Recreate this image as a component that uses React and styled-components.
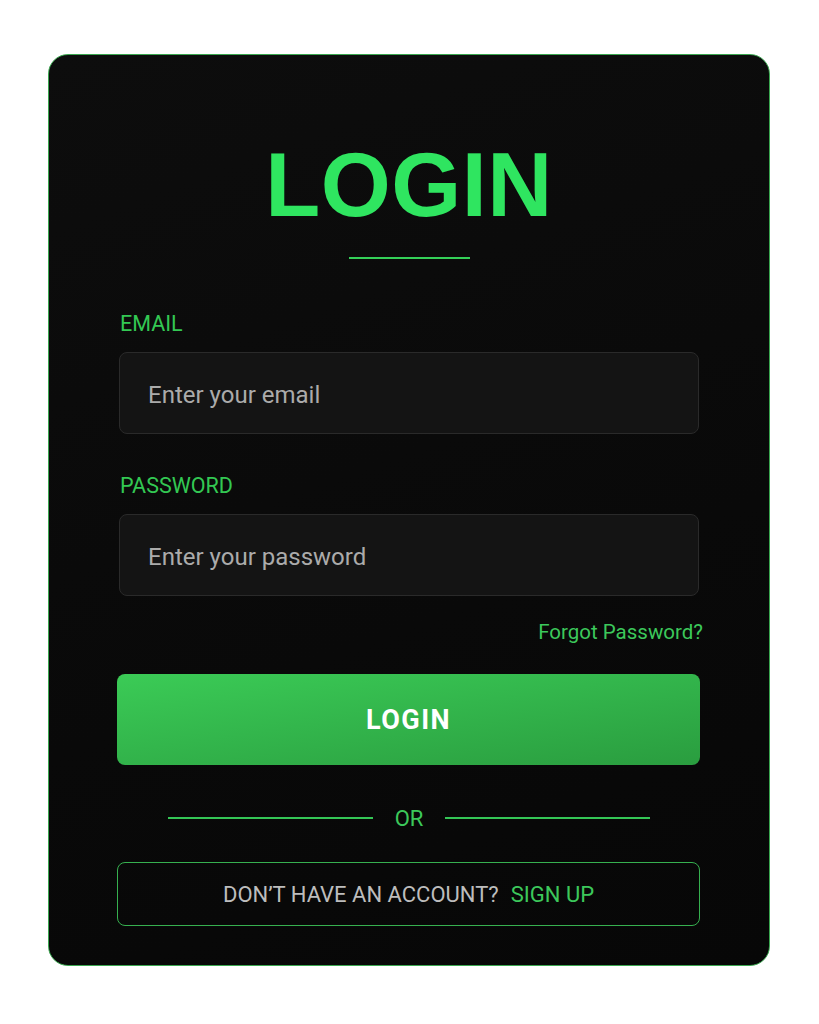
import React from "react";
import styled, { createGlobalStyle } from "styled-components";

const GlobalStyle = createGlobalStyle`
  html, body {
    margin: 0;
    padding: 0;
    background: #ffffff;
  }
  * {
    box-sizing: border-box;
  }
`;

const Page = styled.div`
  padding: 54px 0 58px 48px;
  font-family: Roboto, "Liberation Sans", sans-serif;
`;

const Card = styled.div`
  width: 722px;
  height: 912px;
  padding: 85px 70px 0 70px;
  background: linear-gradient(160deg, #0d0d0d 0%, #090909 60%, #070707 100%);
  border: 1.5px solid #3aa64f;
  border-radius: 20px;
  display: flex;
  flex-direction: column;
`;

const Title = styled.h1`
  margin: 0;
  font-family: "Liberation Sans", Arial, sans-serif;
  font-size: 90px;
  line-height: 90px;
  font-weight: 700;
  color: #2fe560;
  text-align: center;
  letter-spacing: 0.5px;
`;

const Underline = styled.div`
  width: 121px;
  height: 2px;
  margin: 27px auto 0;
  background: #34d058;
`;

const Field = styled.div`
  display: flex;
  flex-direction: column;
  margin-top: ${(p) => p.$top}px;
`;

const Label = styled.label`
  font-size: 21.5px;
  line-height: 24px;
  color: #33c853;
  margin-bottom: 16px;
  padding-left: 1px;
`;

const Input = styled.input`
  width: 100%;
  height: 82px;
  padding: 3px 28px 0;
  background: #141414;
  border: 1px solid #2a2a2a;
  border-radius: 8px;
  font-family: Roboto, "Liberation Sans", sans-serif;
  font-size: 24px;
  color: #d0d0d0;
  outline: none;

  &::placeholder {
    color: #ababab;
  }
`;

const ForgotRow = styled.div`
  display: flex;
  justify-content: flex-end;
  margin: 24px -4px 0 0;
`;

const TextLink = styled.a`
  font-size: 20.5px;
  line-height: 24px;
  color: #3cc85b;
  text-decoration: none;
  cursor: pointer;
`;

const LoginButton = styled.button`
  margin-top: 30px;
  width: 583px;
  margin-left: -2px;
  height: 91px;
  border: none;
  border-radius: 8px;
  background: linear-gradient(172deg, #3bcb56 0%, #33b64c 45%, #2a9d3f 100%);
  color: #ffffff;
  font-family: Roboto, "Liberation Sans", sans-serif;
  font-size: 27px;
  font-weight: 700;
  letter-spacing: 1.5px;
  cursor: pointer;
`;

const Divider = styled.div`
  display: flex;
  align-items: center;
  justify-content: center;
  gap: 22px;
  margin-top: 41px;
  height: 24px;
`;

const Rule = styled.span`
  width: 205px;
  height: 2px;
  background: #34c656;
`;

const OrText = styled.span`
  font-size: 22px;
  color: #3cc85b;
`;

const SignupBox = styled.div`
  margin-top: 32px;
  margin-left: -2px;
  width: 583px;
  height: 64px;
  border: 1.5px solid #36b04f;
  border-radius: 8px;
  display: flex;
  align-items: center;
  justify-content: center;
  gap: 12px;
  font-size: 22px;
`;

const Muted = styled.span`
  color: #bdbdbd;
`;

const Accent = styled.a`
  color: #3cc85b;
  text-decoration: none;
  cursor: pointer;
`;

const App = () => {
  return (
    <Page>
      <GlobalStyle />
      <Card>
        <Title>LOGIN</Title>
        <Underline />
        <Field $top={53}>
          <Label>EMAIL</Label>
          <Input type="email" placeholder="Enter your email" />
        </Field>
        <Field $top={40}>
          <Label>PASSWORD</Label>
          <Input type="password" placeholder="Enter your password" />
        </Field>
        <ForgotRow>
          <TextLink>Forgot Password?</TextLink>
        </ForgotRow>
        <LoginButton>LOGIN</LoginButton>
        <Divider>
          <Rule />
          <OrText>OR</OrText>
          <Rule />
        </Divider>
        <SignupBox>
          <Muted>DON’T HAVE AN ACCOUNT?</Muted>
          <Accent>SIGN UP</Accent>
        </SignupBox>
      </Card>
    </Page>
  );
};

export default App;
